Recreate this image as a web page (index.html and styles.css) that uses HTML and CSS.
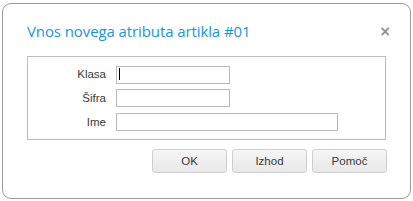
FILE: index.html
```html
<!DOCTYPE html>
<html lang="sl">
<head>
  <meta charset="UTF-8" />
  <title>Vnos novega atributa artikla</title>
  <link rel="stylesheet" href="styles.css">
</head>
<body>

  <div class="dialog">
    <div class="dialog-header">
      <h1>Vnos novega atributa artikla #01</h1>
      <span class="close">&times;</span>
    </div>

    <div class="fields">
      <label for="klasa">Klasa</label>
      <div class="input-wrap">
        <input id="klasa" type="text" class="short">
        <span class="caret"></span>
      </div>

      <label for="sifra">Šifra</label>
      <input id="sifra" type="text" class="short">

      <label for="ime">Ime</label>
      <input id="ime" type="text" class="long">
    </div>

    <div class="buttons">
      <button>OK</button>
      <button>Izhod</button>
      <button>Pomoč</button>
    </div>
  </div>

</body>
</html>
```

FILE: styles.css
```css
body {
  margin: 0;
  font-family: "Liberation Sans", sans-serif;
  background: #fff;
}

.dialog {
  box-sizing: border-box;
  width: 409px;
  height: 196px;
  margin: 3px 0 0 2px;
  border: 1px solid #9a9a9a;
  border-radius: 9px;
  background: #fff;
  padding: 0 24px;
}

.dialog-header {
  display: flex;
  align-items: center;
  justify-content: space-between;
  height: 52px;
}

.dialog-header h1 {
  margin: 2px 0 0;
  font-family: "Open Sans", sans-serif;
  font-weight: normal;
  font-size: 15px;
  letter-spacing: -0.1px;
  color: #1a96dc;
}

.close {
  font-family: "DejaVu Sans", sans-serif;
  font-size: 14px;
  font-weight: bold;
  color: #8e8e8e;
  margin-right: -5px;
  margin-top: 2px;
}

.fields {
  box-sizing: border-box;
  width: 359px;
  border: 1px solid #bcbcbc;
  padding: 8px 0;
  display: grid;
  grid-template-columns: 78px 1fr;
  column-gap: 10px;
  row-gap: 6px;
  align-items: center;
}

.fields label {
  text-align: right;
  font-size: 11.5px;
  color: #3a3a3a;
}

.fields input {
  box-sizing: border-box;
  height: 18px;
  border: 1px solid #b9b9b9;
  padding: 0 3px;
  margin: 0;
  font-size: 11px;
  outline: none;
}

.short {
  width: 114px;
}

.long {
  width: 222px;
}

.input-wrap {
  position: relative;
  height: 18px;
}

.caret {
  position: absolute;
  left: 3px;
  top: 3px;
  width: 1px;
  height: 12px;
  background: #000;
}

.buttons {
  display: flex;
  justify-content: flex-end;
  gap: 5px;
  margin-top: 9px;
  margin-right: -1px;
}

.buttons button {
  width: 75px;
  height: 24px;
  border: 1px solid #cfcfcf;
  border-radius: 3px;
  background: linear-gradient(#f6f6f6, #e8e8e8);
  font-family: "Liberation Sans", sans-serif;
  font-size: 11.5px;
  color: #3a3a3a;
}
```
